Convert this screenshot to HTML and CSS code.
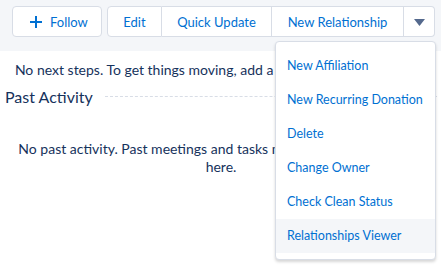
FILE: index.html
```html
<!DOCTYPE html>
<html lang="en">
<head>
  <meta charset="UTF-8" />
  <title>Activity</title>
  <link rel="stylesheet" href="styles.css">
</head>
<body>
  <div class="actions">
    <button class="btn follow">
      <svg width="12" height="12" viewBox="0 0 12 12"><path d="M6 0v12M0 6h12" stroke="#0070d2" stroke-width="2"/></svg>
      Follow
    </button>
    <div class="group">
      <button class="btn edit">Edit</button>
      <button class="btn quick">Quick Update</button>
      <button class="btn newrel">New Relationship</button>
      <button class="btn more">
        <svg width="11" height="7" viewBox="0 0 11 7"><path d="M0 0h11L5.5 7z" fill="#54698d"/></svg>
      </button>
    </div>
  </div>

  <div class="feed">
    <p class="empty first">No next steps. To get things moving, add a task or set up a meeting.</p>
    <div class="section-title">
      <h2>Past Activity</h2>
      <span class="rule"></span>
    </div>
    <p class="empty past">No past activity. Past meetings and tasks marked as done show up here.</p>
  </div>

  <ul class="menu">
    <li>New Affiliation</li>
    <li>New Recurring Donation</li>
    <li>Delete</li>
    <li>Change Owner</li>
    <li>Check Clean Status</li>
    <li class="hover">Relationships Viewer</li>
  </ul>
</body>
</html>
```

FILE: styles.css
```css
* { margin: 0; padding: 0; box-sizing: border-box; }
body {
  font-family: Lato, "Open Sans", sans-serif;
  font-size: 13px;
  color: #16325c;
  background: #fff;
  width: 441px;
  height: 271px;
  overflow: hidden;
  position: relative;
}
.actions {
  display: flex;
  gap: 5px;
  height: 51px;
  padding: 6px 0 0 12px;
  background: #f4f6f9;
}
.btn {
  height: 31px;
  background: #fff;
  border: 1px solid #d8dde6;
  color: #0070d2;
  font-family: inherit;
  font-size: 13px;
  display: flex;
  align-items: center;
  justify-content: center;
}
.follow {
  width: 90px;
  border-radius: 4px;
  gap: 8px;
  justify-content: flex-start;
  padding-left: 17px;
}
.group {
  display: flex;
}
.group .btn { border-left: none; }
.group .btn:first-child {
  border-left: 1px solid #d8dde6;
  border-radius: 4px 0 0 4px;
}
.group .btn:last-child { border-radius: 0 4px 4px 0; }
.edit { width: 55px; }
.quick { width: 110px; }
.newrel { width: 132px; }
.more { width: 31px; padding-top: 1px; }

.feed {
  padding: 10px 4px 0 5px;
}
.empty {
  text-align: center;
  font-size: 14px;
  line-height: 18px;
}
.past {
  padding: 0 12px;
  margin-top: 34px;
}
.section-title {
  display: flex;
  align-items: center;
  gap: 12px;
  margin-top: 7px;
  height: 20px;
}
.section-title h2 {
  font-size: 16px;
  font-weight: normal;
}
.rule {
  flex: 1;
  border-top: 1px dashed #d8dde6;
}

.menu {
  position: absolute;
  top: 41px;
  left: 275px;
  width: 161px;
  height: 219px;
  list-style: none;
  background: #fff;
  border: 1px solid #d8dde6;
  border-radius: 4px;
  box-shadow: 0 2px 3px rgba(0, 0, 0, 0.16);
  padding: 7px 0 6px;
}
.menu li {
  height: 34px;
  line-height: 34px;
  padding-left: 11px;
  font-size: 12.5px;
  color: #0070d2;
  white-space: nowrap;
}
.menu li.hover { background: #f4f6f9; }
```
